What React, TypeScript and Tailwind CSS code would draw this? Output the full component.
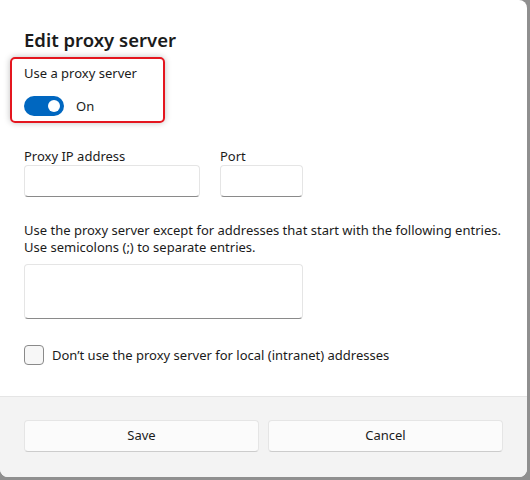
export default function App() {
    return (
        <div
            className="w-[530px] h-[480px] bg-[#8f8f8f] overflow-hidden"
            style={{ fontFamily: '"Segoe UI", "Noto Sans", sans-serif' }}
        >
            <div className="w-[527px] h-[477px] bg-white rounded-tr-lg rounded-bl-lg rounded-br-lg flex flex-col text-[#1b1b1b]">
                <div className="flex-1 px-6 pt-[26px]">
                    <h1 className="text-[18.5px] leading-[28px] font-semibold">
                        Edit proxy server
                    </h1>

                    <div className="mt-[3px] -ml-[14px] w-[155px] h-[66px] border-2 border-[#e4161f] rounded-[5px] shadow-[0_0_6px_rgba(0,0,0,0.25)] pl-3 pt-[4px]">
                        <div className="text-[13px] leading-[20px]">
                            Use a proxy server
                        </div>
                        <div className="mt-[13px] flex items-center gap-3">
                            <div className="w-10 h-5 rounded-full bg-[#0067c0] flex items-center justify-end pr-1">
                                <div className="w-3 h-3 rounded-full bg-white" />
                            </div>
                            <span className="text-[13px] leading-[20px]">On</span>
                        </div>
                    </div>

                    <div className="mt-[24px] flex gap-5">
                        <div className="flex flex-col">
                            <label className="text-[13px] leading-[18px]">
                                Proxy IP address
                            </label>
                            <div className="w-[176px] h-8 rounded border border-[#e5e5e5] border-b-[#8a8a8a] bg-white" />
                        </div>
                        <div className="flex flex-col">
                            <label className="text-[13px] leading-[18px]">Port</label>
                            <div className="w-[83px] h-8 rounded border border-[#e5e5e5] border-b-[#8a8a8a] bg-white" />
                        </div>
                    </div>

                    <p className="mt-[25px] text-[13px] leading-[17px] whitespace-nowrap">
                        Use the proxy server except for addresses that start with the
                        following entries.
                        <br />
                        Use semicolons (;) to separate entries.
                    </p>
                    <div className="mt-[8px] w-[279px] h-[55px] rounded border border-[#e5e5e5] border-b-[#8a8a8a] bg-white" />

                    <label className="mt-[26px] flex items-center gap-2">
                        <span className="w-5 h-5 rounded border border-[#8a8a8a] bg-[#f7f7f7]" />
                        <span className="text-[13px] leading-[20px]">
                            Don’t use the proxy server for local (intranet) addresses
                        </span>
                    </label>
                </div>

                <div className="h-[81px] bg-[#f3f3f3] border-t border-[#e5e5e5] rounded-bl-lg rounded-br-lg px-6 pt-[23px] flex gap-[9px]">
                    <button className="flex-1 h-8 rounded bg-[#fbfbfb] border border-[#e5e5e5] border-b-[#cccccc] text-[13px]">
                        Save
                    </button>
                    <button className="flex-1 h-8 rounded bg-[#fbfbfb] border border-[#e5e5e5] border-b-[#cccccc] text-[13px]">
                        Cancel
                    </button>
                </div>
            </div>
        </div>
    );
}
